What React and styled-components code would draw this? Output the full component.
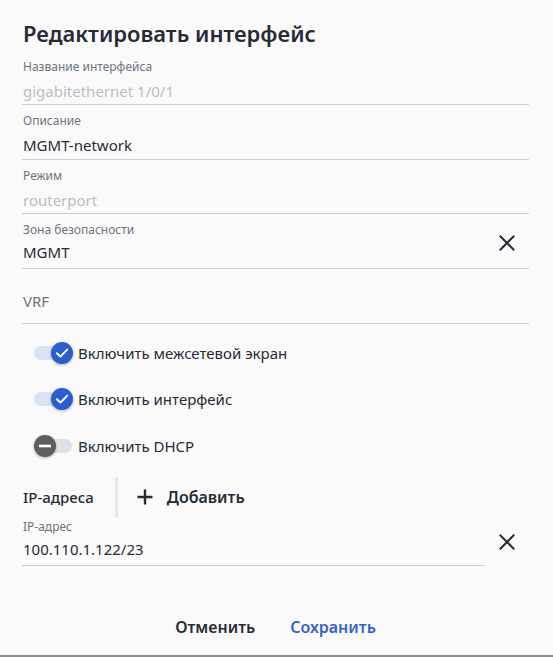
import React from "react";
import styled, { createGlobalStyle } from "styled-components";

const GlobalStyle = createGlobalStyle`
  html, body {
    margin: 0;
    padding: 0;
    background: #fafafb;
  }
  body {
    font-family: "Noto Sans", "Open Sans", sans-serif;
    color: #262b36;
  }
`;

const Dialog = styled.div`
  width: 553px;
  height: 657px;
  box-sizing: border-box;
  padding: 18px 24px 0 22px;
  background: #fafafb;
  border-bottom: 2px solid #8d8d8d;
  display: flex;
  flex-direction: column;
`;

const Title = styled.h1`
  margin: 0 0 2.5px 1px;
  font-size: 22px;
  line-height: 30px;
  font-weight: 600;
  color: #262b36;
`;

const Field = styled.div`
  display: flex;
  align-items: center;
  padding: 8px 0 ${({ $tight }) => ($tight ? "4px" : "1.5px")};
  border-bottom: 1px solid #c9cdd6;
`;

const FieldBody = styled.div`
  flex: 1;
  display: flex;
  flex-direction: column;
  padding-left: 1px;
`;

const Label = styled.div`
  font-size: 12px;
  line-height: 16px;
  color: #6e7380;
`;

const Value = styled.div`
  margin-top: ${({ $tight }) => ($tight ? "2px" : "4px")};
  font-size: 15px;
  line-height: 24px;
  color: ${({ $muted }) => ($muted ? "#b9bdc6" : "#262b36")};
`;

const Placeholder = styled.div`
  margin: 12px 0 8px;
  font-size: 15px;
  line-height: 24px;
  color: #6e7380;
`;

const ClearButton = styled.button`
  width: 30px;
  height: 30px;
  margin-right: ${({ $outside }) => ($outside ? "0" : "7px")};
  border: 0;
  background: transparent;
  padding: 0;
  display: flex;
  align-items: center;
  justify-content: center;
  color: #262b36;
  cursor: pointer;
`;

const ToggleList = styled.div`
  margin-top: 6px;
  display: flex;
  flex-direction: column;
  padding-left: 12px;
`;

const ToggleRow = styled.label`
  height: 46.5px;
  display: flex;
  align-items: center;
  gap: 5px;
  font-size: 15px;
  color: #262b36;
  cursor: pointer;
`;

const Switch = styled.span`
  position: relative;
  width: 39px;
  height: 22px;
  flex-shrink: 0;
`;

const Track = styled.span`
  position: absolute;
  left: 0;
  top: 4px;
  width: 38px;
  height: 14px;
  border-radius: 7px;
  background: ${({ $on }) => ($on ? "#dae2f5" : "#e1e1e3")};
`;

const Knob = styled.span`
  position: absolute;
  top: 0;
  left: ${({ $on }) => ($on ? "17px" : "0")};
  width: 22px;
  height: 22px;
  border-radius: 50%;
  background: ${({ $on }) => ($on ? "#2b5dd2" : "#5e5e5e")};
  box-shadow: 0 1px 3px rgba(0, 0, 0, 0.3);
  display: flex;
  align-items: center;
  justify-content: center;
`;

const SectionHeader = styled.div`
  margin-top: 8px;
  height: 40px;
  display: flex;
  align-items: center;
`;

const SectionTitle = styled.div`
  padding: 0 21px 0 1px;
  font-size: 15px;
  font-weight: 500;
  color: #262b36;
`;

const Divider = styled.div`
  width: 3px;
  align-self: stretch;
  background: #e6e8ec;
`;

const AddButton = styled.button`
  margin-left: 19px;
  display: flex;
  align-items: center;
  gap: 14px;
  border: 0;
  background: transparent;
  padding: 0;
  font-family: inherit;
  font-size: 16px;
  font-weight: 600;
  color: #262b36;
  cursor: pointer;
`;

const IpRow = styled.div`
  display: flex;
  align-items: center;
`;

const IpField = styled(Field)`
  flex: 1;
  padding-top: 2px;
`;

const OutsideClear = styled.div`
  width: 44px;
  display: flex;
  justify-content: center;
`;

const Footer = styled.div`
  margin-top: 43px;
  display: flex;
  justify-content: center;
  gap: 3px;
`;

const FooterButton = styled.button`
  border: 0;
  background: transparent;
  padding: 6px 16px;
  font-family: inherit;
  font-size: 16px;
  line-height: 24px;
  font-weight: 600;
  color: ${({ $primary }) => ($primary ? "#3561d0" : "#262b36")};
  cursor: pointer;
`;

const CloseIcon = () => (
  <svg width="16" height="16" viewBox="0 0 16 16">
    <path d="M1.5 1.5 L14.5 14.5 M14.5 1.5 L1.5 14.5" stroke="currentColor" strokeWidth="2" strokeLinecap="square" />
  </svg>
);

const PlusIcon = () => (
  <svg width="16" height="16" viewBox="0 0 16 16">
    <path d="M8 0.5 V15.5 M0.5 8 H15.5" stroke="#262b36" strokeWidth="2.4" />
  </svg>
);

const CheckIcon = () => (
  <svg width="22" height="22" viewBox="0 0 22 22">
    <path d="M5.8 11.2 L9.4 14.6 L16.2 7.6" fill="none" stroke="#fff" strokeWidth="2" strokeLinecap="round" strokeLinejoin="round" />
  </svg>
);

const MinusIcon = () => (
  <svg width="22" height="22" viewBox="0 0 22 22">
    <path d="M5 11 H17" stroke="#fff" strokeWidth="2.6" />
  </svg>
);

const Toggle = ({ on, children }) => (
  <ToggleRow>
    <Switch>
      <Track $on={on} />
      <Knob $on={on}>{on ? <CheckIcon /> : <MinusIcon />}</Knob>
    </Switch>
    {children}
  </ToggleRow>
);

const fields = [
  { label: "Название интерфейса", value: "gigabitethernet 1/0/1", muted: true },
  { label: "Описание", value: "MGMT-network" },
  { label: "Режим", value: "routerport", muted: true },
];

const App = () => {
  return (
    <>
      <GlobalStyle />
      <Dialog>
        <Title>Редактировать интерфейс</Title>

        {fields.map((f) => (
          <Field key={f.label}>
            <FieldBody>
              <Label>{f.label}</Label>
              <Value $muted={f.muted}>{f.value}</Value>
            </FieldBody>
          </Field>
        ))}

        <Field $tight>
          <FieldBody>
            <Label>Зона безопасности</Label>
            <Value $tight>MGMT</Value>
          </FieldBody>
          <ClearButton>
            <CloseIcon />
          </ClearButton>
        </Field>

        <Field>
          <FieldBody>
            <Placeholder>VRF</Placeholder>
          </FieldBody>
        </Field>

        <ToggleList>
          <Toggle on>Включить межсетевой экран</Toggle>
          <Toggle on>Включить интерфейс</Toggle>
          <Toggle>Включить DHCP</Toggle>
        </ToggleList>

        <SectionHeader>
          <SectionTitle>IP-адреса</SectionTitle>
          <Divider />
          <AddButton>
            <PlusIcon />
            Добавить
          </AddButton>
        </SectionHeader>

        <IpRow>
          <IpField $tight>
            <FieldBody>
              <Label>IP-адрес</Label>
              <Value $tight>100.110.1.122/23</Value>
            </FieldBody>
          </IpField>
          <OutsideClear>
            <ClearButton $outside>
              <CloseIcon />
            </ClearButton>
          </OutsideClear>
        </IpRow>

        <Footer>
          <FooterButton>Отменить</FooterButton>
          <FooterButton $primary>Сохранить</FooterButton>
        </Footer>
      </Dialog>
    </>
  );
};

export default App;
